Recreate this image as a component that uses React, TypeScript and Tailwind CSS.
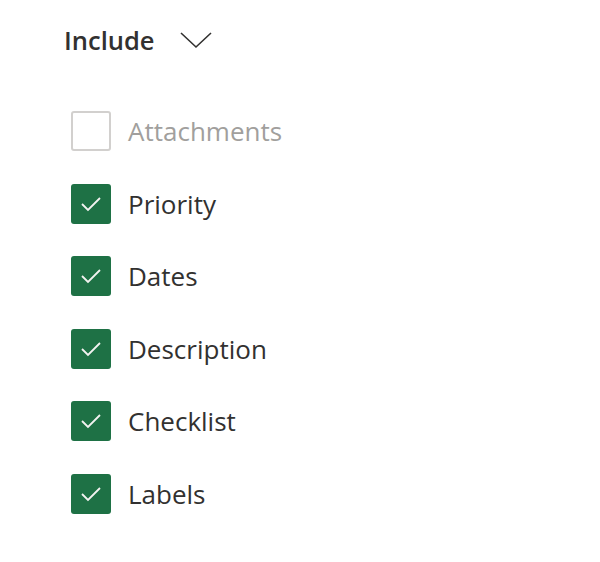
import React from "react";

const items = [
  { label: "Attachments", checked: false },
  { label: "Priority", checked: true },
  { label: "Dates", checked: true },
  { label: "Description", checked: true },
  { label: "Checklist", checked: true },
  { label: "Labels", checked: true },
];

export default function App() {
  return (
    <div
      className="w-[600px] h-[562px] bg-white"
      style={{ fontFamily: '"Open Sans", "Noto Sans", sans-serif' }}
    >
      <div className="pl-[64px] pt-[22px] flex items-center gap-[24px]">
        <span className="text-[25.5px] leading-[36px] font-semibold text-[#323130]">Include</span>
        <svg width="34" height="20" viewBox="0 0 34 20" fill="none">
          <path d="M2 3 L17 17 L32 3" stroke="#323130" strokeWidth="1.6" />
        </svg>
      </div>
      <div className="pl-[71px] pt-[53px] flex flex-col gap-[32.6px]">
        {items.map((it) => (
          <div key={it.label} className="flex items-center gap-[17px] h-[40px]">
            {it.checked ? (
              <div className="w-[40px] h-[40px] rounded-[3px] bg-[#1e7145] flex items-center justify-center">
                <svg width="22" height="16" viewBox="0 0 22 16" fill="none">
                  <path d="M2 8 L8 14 L20 2" stroke="#f3f2f1" strokeWidth="1.8" />
                </svg>
              </div>
            ) : (
              <div className="w-[40px] h-[40px] rounded-[3px] border-2 border-[#d2d0ce] bg-white" />
            )}
            <span
              className={`text-[26px] leading-[36px] ${
                it.checked ? "text-[#323130]" : "text-[#a19f9d]"
              }`}
            >
              {it.label}
            </span>
          </div>
        ))}
      </div>
    </div>
  );
}
